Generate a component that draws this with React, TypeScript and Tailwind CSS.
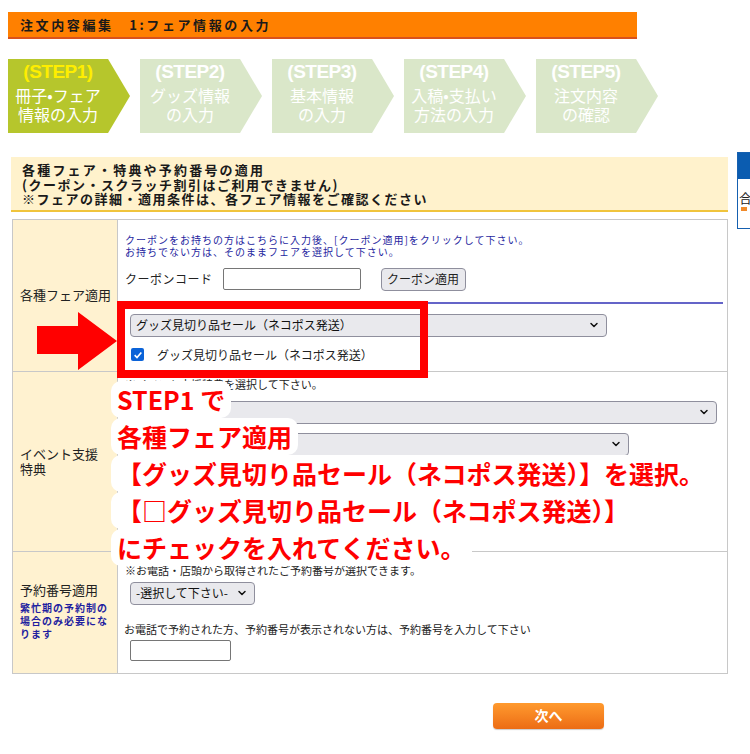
import * as React from "react";
import { ChevronDown } from "lucide-react";

const steps = [
  { label: "(STEP1)", lines: ["冊子•フェア", "情報の入力"], active: true },
  { label: "(STEP2)", lines: ["グッズ情報", "の入力"], active: false },
  { label: "(STEP3)", lines: ["基本情報", "の入力"], active: false },
  { label: "(STEP4)", lines: ["入稿•支払い", "方法の入力"], active: false },
  { label: "(STEP5)", lines: ["注文内容", "の確認"], active: false },
];

const FakeSelect = ({ value, className }: { value: string; className?: string }) => (
  <div
    className={
      "flex items-center justify-between h-[23px] bg-[#e9e9ed] border border-[#8f8f9d] rounded-[4px] pl-[5px] pr-[6px] text-[12px] text-[#111] " +
      (className ?? "")
    }
  >
    <span className="whitespace-nowrap">{value}</span>
    <ChevronDown className="w-[12px] h-[12px] shrink-0 ml-[4px]" strokeWidth={3} />
  </div>
);

export default function App() {
  return (
    <div className="relative w-[750px] h-[754px] overflow-hidden bg-white text-[#222] font-['Noto_Sans_CJK_JP','Noto_Sans',sans-serif]">
      <div className="flex">
        <main className="w-[729px] shrink-0 pt-[12px]">
          {/* title bar */}
          <div className="ml-[8px] w-[629px] h-[27px] bg-[#ff8000] border-b-2 border-[#d9521c] flex items-center pl-[12px] text-[13px] font-bold tracking-[2.6px] text-[#1a1a1a]">
            注文内容編集　1:フェア情報の入力
          </div>

          {/* steps */}
          <div className="ml-[8px] mt-[20px] flex gap-[10px]">
            {steps.map((s) => (
              <div
                key={s.label}
                className={
                  "w-[122px] h-[74px] [clip-path:polygon(0_0,82%_0,100%_50%,82%_100%,0_100%)] " +
                  (s.active ? "bg-[#b6c62c]" : "bg-[#dae7c9]")
                }
              >
                <div className="w-[100px] flex flex-col items-center pt-[2px] text-white">
                  <div
                    className={
                      "font-['Liberation_Sans',sans-serif] font-black text-[19px] leading-[22px] tracking-[-0.5px] " +
                      (s.active ? "text-[#ffee00]" : "text-white")
                    }
                  >
                    {s.label}
                  </div>
                  <div className="mt-[3px] text-[16px] leading-[19px] text-center">
                    {s.lines.map((l) => (
                      <div key={l}>{l}</div>
                    ))}
                  </div>
                </div>
              </div>
            ))}
          </div>

          {/* notice */}
          <div className="ml-[11px] mt-[24px] w-[717px] bg-[#fff2cc] border-b-2 border-[#f0c43c] pt-[6px] pb-[3px] pl-[11px] text-[13px] leading-[14.5px] font-bold tracking-[1.5px] text-[#1a1a1a]">
            <div className="tracking-[2.2px]">各種フェア・特典や予約番号の適用</div>
            <div>(クーポン・スクラッチ割引はご利用できません)</div>
            <div>※フェアの詳細・適用条件は、各フェア情報をご確認ください</div>
          </div>

          {/* form table */}
          <div className="ml-[12px] mt-[7px] w-[716px] border border-[#c8c8c8]">
            {/* row 1 */}
            <div className="flex h-[151px]">
              <div className="w-[105px] shrink-0 bg-[#fff2d0] border-r border-[#c8c8c8] flex items-center pl-[7px] text-[13px]">
                各種フェア適用
              </div>
              <div className="flex-1">
                <div className="pl-[7px] pt-[14px] text-[10px] leading-[12px] tracking-[1px] text-[#1f1fa0]">
                  <div>クーポンをお持ちの方はこちらに入力後、[クーポン適用]をクリックして下さい。</div>
                  <div>お持ちでない方は、そのままフェアを選択して下さい。</div>
                </div>
                <div className="mt-[10px] pl-[7px] flex items-center">
                  <span className="text-[12px] tracking-[0.5px]">クーポンコード</span>
                  <div className="ml-[10px] w-[138px] h-[22px] border border-[#767676] rounded-[2px] bg-white" />
                  <div className="ml-[20px] w-[85px] h-[23px] bg-[#e9e9ed] border border-[#8f8f9d] rounded-[4px] flex items-center justify-center text-[12px]">
                    クーポン適用
                  </div>
                </div>
                <div className="mt-[11px] mr-[4px] h-[2px] bg-[#6464c8]" />
                <FakeSelect value="グッズ見切り品セール（ネコポス発送）" className="mt-[10px] ml-[12px] w-[477px]" />
                <div className="mt-[9px] ml-[13px] flex items-center">
                  <span className="w-[13px] h-[13px] rounded-[2px] bg-[#0b63d8] flex items-center justify-center">
                    <svg viewBox="0 0 12 12" className="w-[10px] h-[10px]">
                      <path d="M2 6.2 L4.8 9 L10 3" fill="none" stroke="white" strokeWidth="2" />
                    </svg>
                  </span>
                  <span className="ml-[13px] text-[12px]">グッズ見切り品セール（ネコポス発送）</span>
                </div>
              </div>
            </div>

            {/* row 2 */}
            <div className="flex h-[180px] border-t border-[#c8c8c8]">
              <div className="w-[105px] shrink-0 bg-[#fff2d0] border-r border-[#c8c8c8] flex items-center pl-[7px] text-[13px] leading-[15px]">
                <div>
                  <div>イベント支援</div>
                  <div>特典</div>
                </div>
              </div>
              <div className="flex-1">
                <div className="pl-[7px] pt-[6px] text-[11px] leading-[12px]">※イベント支援特典を選択して下さい。</div>
                <FakeSelect value="-選択して下さい-" className="mt-[11px] ml-[12px] w-[587px]" />
                <FakeSelect value="" className="mt-[9px] ml-[12px] w-[499px]" />
                <div className="mt-[20px] pl-[7px] text-[10px] leading-[16px] tracking-[1px] text-[#1f1fa0]">
                  <div>※イベント支援特典をご希望の方は、イベント名を入力して下さい。</div>
                  <div>※ご利用できる特典はイベントによって異なります。</div>
                  <div>※詳細は各フェア情報をご確認いただけます。</div>
                </div>
              </div>
            </div>

            {/* row 3 */}
            <div className="flex h-[122px] border-t border-[#c8c8c8]">
              <div className="w-[105px] shrink-0 bg-[#fff2d0] border-r border-[#c8c8c8] flex items-center pl-[7px]">
                <div className="-mt-[4px]">
                  <div className="text-[13px] leading-[17px]">予約番号適用</div>
                  <div className="mt-[3px] text-[10px] leading-[13px] tracking-[1px] font-bold text-[#1f1fa0]">
                    <div>繁忙期の予約制の</div>
                    <div>場合のみ必要にな</div>
                    <div>ります</div>
                  </div>
                </div>
              </div>
              <div className="flex-1">
                <div className="pl-[7px] pt-[12px] text-[11px] leading-[12px]">※お電話・店頭から取得されたご予約番号が選択できます。</div>
                <FakeSelect value="-選択して下さい-" className="mt-[6px] ml-[12px] w-[125px]" />
                <div className="mt-[18px] pl-[6px] text-[11px] leading-[12px]">
                  お電話で予約された方、予約番号が表示されない方は、予約番号を入力して下さい
                </div>
                <div className="mt-[5px] ml-[12px] w-[101px] h-[21px] border border-[#767676] rounded-[2px] bg-white" />
              </div>
            </div>
          </div>

          {/* next button */}
          <div className="mt-[29px] ml-[493px] w-[111px] h-[26px] rounded-[4px] bg-gradient-to-b from-[#ff9a2e] to-[#ec6c14] flex items-center justify-center text-white text-[14px] font-bold shadow-[0_1px_1px_rgba(0,0,0,0.2)]">
            次へ
          </div>
        </main>

        {/* side panel, cut off at the right edge */}
        <aside className="ml-[8px] mt-[152px] w-[200px] h-[77px] shrink-0 border border-[#1560b0] bg-white">
          <div className="h-[26px] bg-[#0b5cb0]" />
          <div className="pl-[1px] pt-[12px] text-[13px] leading-[14px]">合計</div>
          <div className="ml-[3px] mt-[2px] w-[6px] h-[4px] bg-[#f08a2a]" />
        </aside>
      </div>

      {/* red frame around the fair select */}
      <div className="absolute left-[117px] top-[301px] w-[311px] h-[77px] border-[8px] border-[#ff0000]" />

      {/* red arrow */}
      <svg className="absolute left-[37px] top-[312px] w-[80px] h-[58px]" viewBox="0 0 80 58">
        <polygon points="0,14 41,14 41,0 80,29 41,58 41,42 0,42" fill="#ff0000" />
      </svg>

      {/* annotation */}
      <div className="absolute left-[111px] top-[381px] text-[25px] leading-[37px] font-bold text-[#ff0000]">
        <div className="w-fit bg-white rounded-[10px] px-[6px]">STEP1 で</div>
        <div className="w-fit bg-white rounded-[10px] px-[6px]">各種フェア適用</div>
        <div className="w-fit bg-white rounded-[10px] px-[6px]">【グッズ見切り品セール（ネコポス発送）】を選択。</div>
        <div className="w-fit bg-white rounded-[10px] px-[6px]">【□グッズ見切り品セール（ネコポス発送）】</div>
        <div className="w-fit bg-white rounded-[10px] px-[6px]">にチェックを入れてください。</div>
      </div>
    </div>
  );
}
